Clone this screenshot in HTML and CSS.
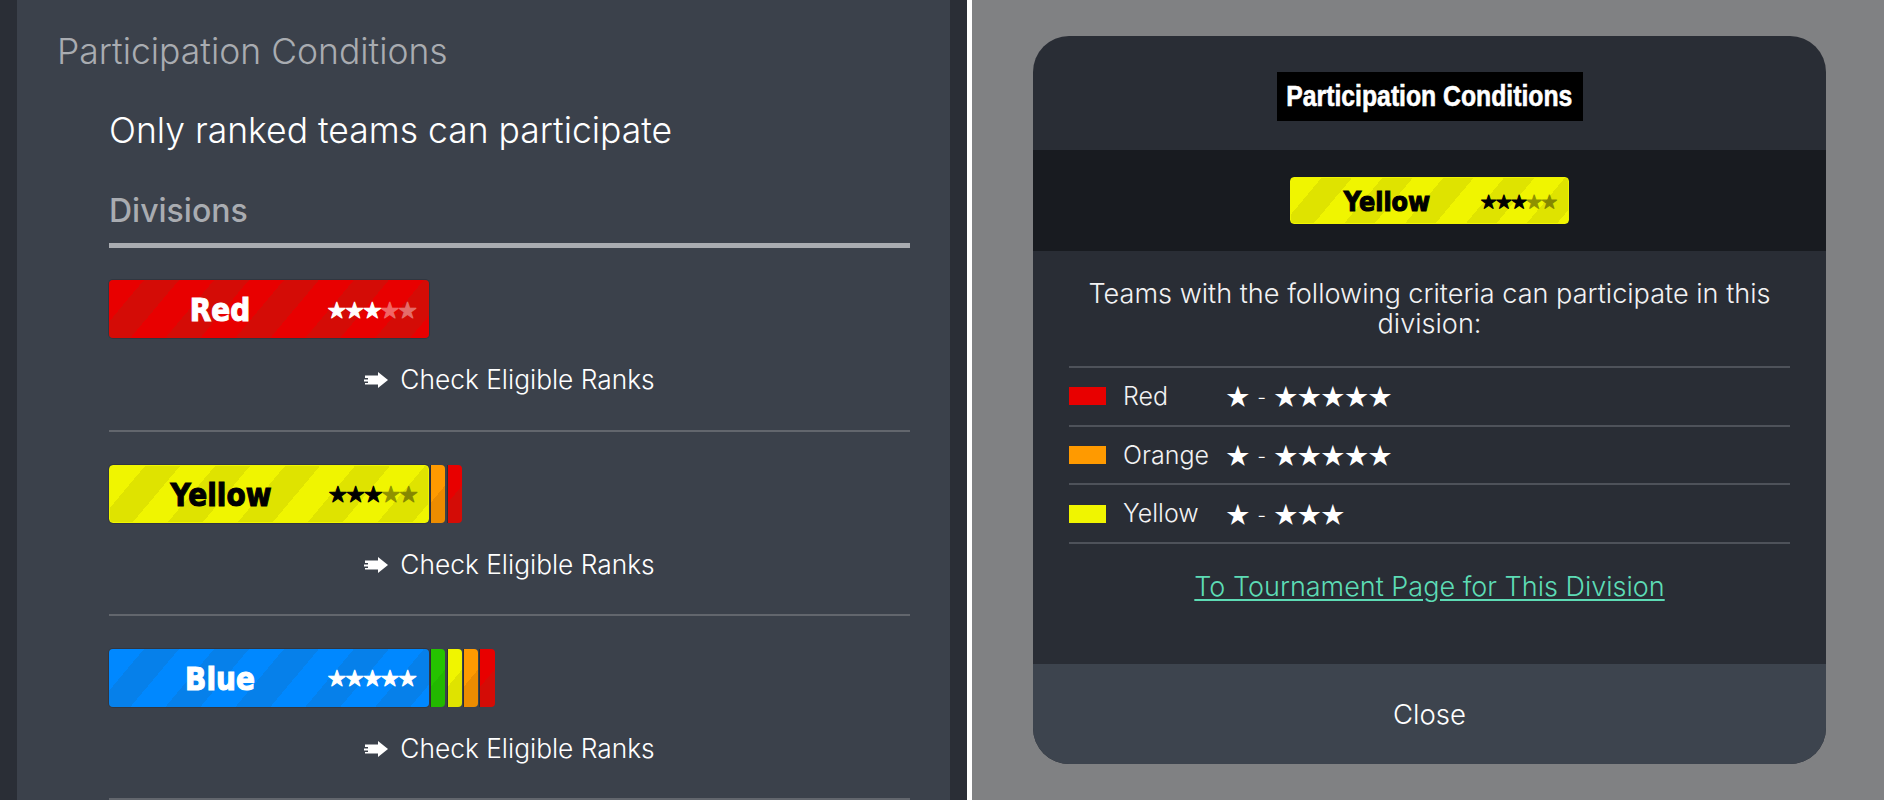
FILE: index.html
```html
<!DOCTYPE html>
<html lang="en">
<head>
<meta charset="utf-8">
<title>Participation Conditions</title>
<link rel="stylesheet" href="styles.css">
</head>
<body>
<main class="page">
  <section class="screen">
    <div class="panel">
      <h2 class="panel-title">Participation Conditions</h2>
      <div class="panel-body">
        <p class="lead">Only ranked teams can participate</p>
        <h3 class="section-title">Divisions</h3>
        <ul class="divisions">
          <li class="division">
            <div class="badge-row">
              <div class="badge badge-red"><span class="badge-name">Red</span><span class="badge-stars">★★★<i>★★</i></span></div>
            </div>
            <a class="check"><svg class="arrow" viewBox="0 0 24 16"><path d="M14 0 24 8 14 16V12.5H1V11H4V9.5H0V7.5H4V6H1V3.5H14Z"/></svg>Check Eligible Ranks</a>
          </li>
          <li class="division">
            <div class="badge-row">
              <div class="badge badge-yellow"><span class="badge-name">Yellow</span><span class="badge-stars">★★★<i>★★</i></span></div>
              <span class="seg seg-orange"></span><span class="seg seg-red"></span>
            </div>
            <a class="check"><svg class="arrow" viewBox="0 0 24 16"><path d="M14 0 24 8 14 16V12.5H1V11H4V9.5H0V7.5H4V6H1V3.5H14Z"/></svg>Check Eligible Ranks</a>
          </li>
          <li class="division">
            <div class="badge-row">
              <div class="badge badge-blue"><span class="badge-name">Blue</span><span class="badge-stars">★★★★★</span></div>
              <span class="seg seg-green"></span><span class="seg seg-yellow"></span><span class="seg seg-orange"></span><span class="seg seg-red"></span>
            </div>
            <a class="check"><svg class="arrow" viewBox="0 0 24 16"><path d="M14 0 24 8 14 16V12.5H1V11H4V9.5H0V7.5H4V6H1V3.5H14Z"/></svg>Check Eligible Ranks</a>
          </li>
        </ul>
      </div>
    </div>
  </section>
  <section class="overlay">
    <div class="modal">
      <header class="modal-head"><h2 class="modal-title"><span class="modal-title-text">Participation Conditions</span></h2></header>
      <div class="modal-band">
        <div class="badge badge-yellow badge-small"><span class="badge-name">Yellow</span><span class="badge-stars">★★★<i>★★</i></span></div>
      </div>
      <div class="modal-body">
        <p class="criteria">Teams with the following criteria can participate in this division:</p>
        <ul class="ranks">
          <li class="rank"><span class="swatch swatch-red"></span><span class="rank-name">Red</span><span class="rank-stars">★ - ★★★★★</span></li>
          <li class="rank"><span class="swatch swatch-orange"></span><span class="rank-name">Orange</span><span class="rank-stars">★ - ★★★★★</span></li>
          <li class="rank"><span class="swatch swatch-yellow"></span><span class="rank-name">Yellow</span><span class="rank-stars">★ - ★★★</span></li>
        </ul>
        <a class="tournament-link" href="#">To Tournament Page for This Division</a>
      </div>
      <button class="close" type="button">Close</button>
    </div>
  </section>
</main>
</body>
</html>
```
FILE: styles.css
```css
* { box-sizing: border-box; }
html, body { margin: 0; padding: 0; height: 800px; overflow: hidden; background: #fff; }
body { font-family: Inter, "Noto Sans", sans-serif; font-weight: 300; color: #fff; }
h2, h3, p, ul { margin: 0; padding: 0; font-weight: inherit; }
ul { list-style: none; }

.page { display: flex; width: 1884px; height: 800px; gap: 5px; }

.screen { width: 967px; height: 800px; padding: 0 17px; background: #2a2e36; overflow: hidden; }
.panel { height: 800px; padding: 32px 40px 0; background: #3b414b; overflow: hidden; }
.panel-title { font-size: 35.5px; line-height: 40px; color: #a9acb1; }
.panel-body { margin-left: 52px; }
.lead { margin-top: 39px; font-size: 35.5px; line-height: 40px; color: #fff; }
.section-title { margin-top: 42px; font-size: 32px; line-height: 36px; font-weight: 500; color: #a9acb1; padding-bottom: 13.5px; border-bottom: 5px solid #a9acb1; }

.division { height: 184.3px; padding-top: 32.9px; border-bottom: 2.2px solid #62666d; }
.badge-row { display: flex; height: 58px; gap: 2.2px; }
.check { display: flex; align-items: center; justify-content: center; gap: 12px; margin-top: 25px; font-size: 26.3px; line-height: 34px; color: #fff; }
.arrow { width: 24px; height: 16px; fill: #fff; flex: none; }

.badge {
  --a: #e80000; --b: #d40c06; --band: 26.8px;
  display: flex; align-items: center; flex: none;
  width: 320px; height: 58px; border-radius: 4px;
  color: #fff;
  background: repeating-linear-gradient(130deg, var(--a) 0 var(--band), var(--b) var(--band) calc(var(--band) * 2));
  box-shadow: 0 0 0 1px rgba(20, 24, 30, .25);
}
.badge-name { flex: none; width: 222px; margin: 4px -3px 0 0; text-align: center; font-family: "DejaVu Sans", sans-serif; font-weight: 700; font-size: 28px; line-height: 1; -webkit-text-stroke: 1px currentColor; transform: scaleY(1.12); }
.badge-stars { font-family: "Noto Sans CJK JP", sans-serif; font-weight: 700; font-size: 17.7px; line-height: 1; -webkit-text-stroke: 1.1px currentColor; white-space: nowrap; }
.badge-stars i { font-style: normal; opacity: .4; }
.badge-red { --a: #e80000; --b: #d40c06; }
.badge-yellow { --a: #f0f500; --b: #dfe300; color: #000; border: 1.5px solid #f0f500; }
.badge-blue { --a: #0088ff; --b: #0680ea; }

.badge-small { --band: 23.3px; width: 279px; height: 47px; }
.badge-small .badge-name { width: 192px; margin: 3px -2px 0 0; font-size: 24px; }
.badge-small .badge-stars { font-size: 15.2px; margin-top: 1px; }

.seg { flex: none; width: 14.2px; height: 58px; border-radius: 0 4px 4px 0; box-shadow: -1px 0 0 #2a2e36; }
.seg-red { background: linear-gradient(130deg, #e80000 50%, #d40c06 50%); }
.seg-orange { background: linear-gradient(130deg, #ff9a00 50%, #ec8c00 50%); }
.seg-yellow { background: linear-gradient(130deg, #f0f500 50%, #dfe300 50%); }
.seg-green { background: linear-gradient(130deg, #25c300 50%, #22b800 50%); }

.overlay { flex: 1; height: 800px; padding: 36px 58px 0 61px; background: #808183; }
.modal { display: flex; flex-direction: column; height: 728px; border-radius: 36px; overflow: hidden; background: #292d35; }
.modal-head { display: flex; justify-content: center; height: 114px; padding-top: 36px; }
.modal-title { width: 306px; height: 49px; background: #000; text-align: center; font-family: "Liberation Sans", sans-serif; font-weight: 700; font-size: 30px; line-height: 47px; color: #fff; white-space: nowrap; }
.modal-title-text { display: inline-block; transform: scaleX(.825); transform-origin: center; -webkit-text-stroke: .6px #fff; margin: 0 -40px; }
.modal-band { display: flex; justify-content: center; height: 101px; padding-top: 27px; background: #181b20; }
.modal-body { flex: 1; padding: 28px 36px 0; text-align: center; }
.criteria { font-size: 27.1px; line-height: 29.5px; color: #f2f2f3; }
.ranks { margin-top: 28px; border-top: 2px solid #4e525a; }
.rank { display: flex; align-items: center; height: 58.7px; border-bottom: 2px solid #4e525a; text-align: left; }
.swatch { flex: none; width: 37px; height: 18px; margin-right: 17px; }
.swatch-red { background: #e80000; }
.swatch-orange { background: #ff9a00; }
.swatch-yellow { background: #f0f500; }
.rank-name { width: 103px; font-size: 25px; margin-top: -1px; color: #f2f2f3; }
.rank-stars { font-family: "Noto Sans CJK JP", sans-serif; font-size: 23.6px; word-spacing: 3px; margin-top: -2px; color: #fff; white-space: nowrap; }
.tournament-link { display: block; margin-top: 25.5px; font-size: 27px; line-height: 34px; text-underline-offset: 3px; color: #5ddcb5; }
.close { display: block; width: 100%; height: 100px; padding: 0; border: 0; background: #3d444e; color: #fff; font: inherit; font-size: 27.5px; }
```
